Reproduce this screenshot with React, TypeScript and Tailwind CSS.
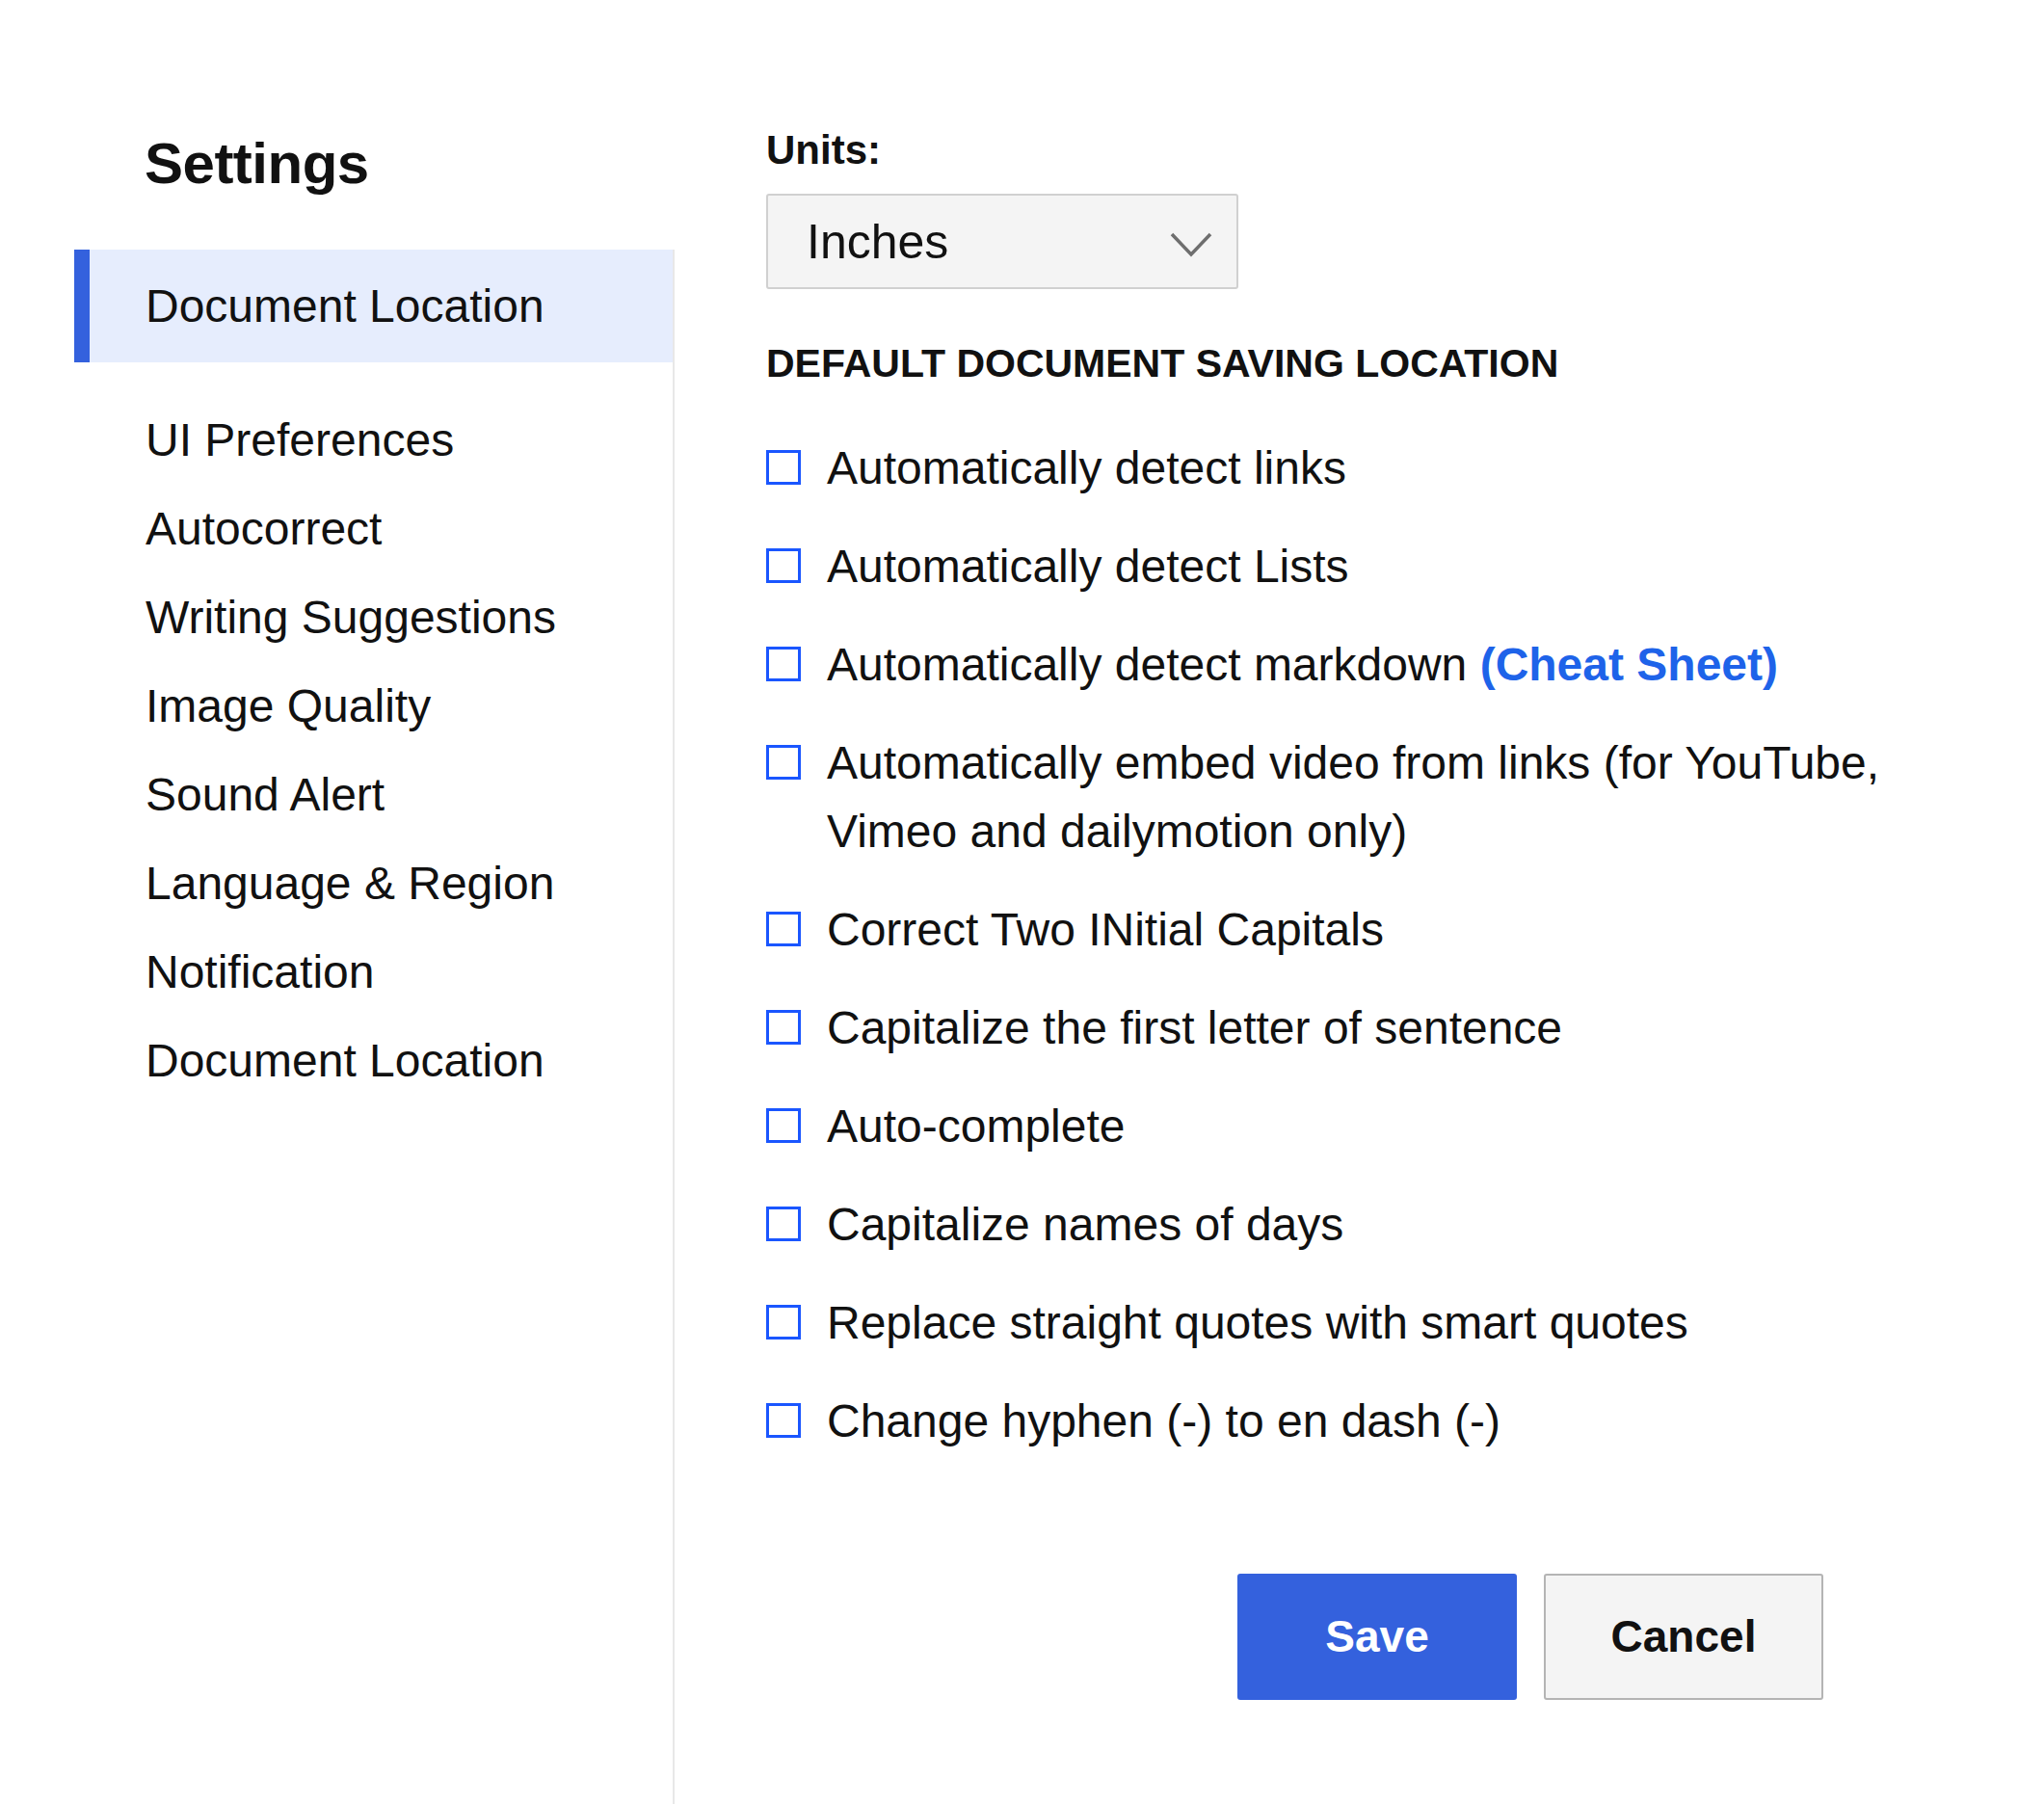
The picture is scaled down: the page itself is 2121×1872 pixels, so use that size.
import React, { useState } from 'react';

const navItems = [
  'UI Preferences',
  'Autocorrect',
  'Writing Suggestions',
  'Image Quality',
  'Sound Alert',
  'Language & Region',
  'Notification',
  'Document Location',
];

const options: { id: string; label: React.ReactNode }[] = [
  { id: 'links', label: 'Automatically detect links' },
  { id: 'lists', label: 'Automatically detect Lists' },
  {
    id: 'markdown',
    label: (
      <>
        Automatically detect markdown{' '}
        <a href="#" className="font-bold text-[#1e63e9]">(Cheat Sheet)</a>
      </>
    ),
  },
  { id: 'embed', label: 'Automatically embed video from links (for YouTube, Vimeo and dailymotion only)' },
  { id: 'initials', label: 'Correct Two INitial Capitals' },
  { id: 'sentence', label: 'Capitalize the first letter of sentence' },
  { id: 'complete', label: 'Auto-complete' },
  { id: 'days', label: 'Capitalize names of days' },
  { id: 'quotes', label: 'Replace straight quotes with smart quotes' },
  { id: 'dash', label: 'Change hyphen (-) to en dash (-)' },
];

export default function App() {
  const [checked, setChecked] = useState<Record<string, boolean>>({});

  const toggle = (id: string) => setChecked((c) => ({ ...c, [id]: !c[id] }));

  return (
    <div className="flex h-screen w-full overflow-hidden bg-white font-['Liberation_Sans',Arial,sans-serif] text-[#111]">
      {/* sidebar */}
      <aside className="ml-[77px] flex w-[623px] shrink-0 flex-col">
        <h1 className="mt-[140px] pl-[73px] text-[60px] font-bold leading-none tracking-[-0.5px]">Settings</h1>
        <nav className="mt-[59px] flex flex-1 flex-col border-r-2 border-[#e8e8e8]">
          <div className="flex h-[117px] items-center border-l-[16px] border-[#3461dd] bg-[#e6edfd] pl-[58px] text-[48px] leading-none">
            Document Location
          </div>
          <ul className="mt-[35px]">
            {navItems.map((item, i) => (
              <li key={i} className="h-[92px] pl-[74px] text-[48px] leading-[92px]">
                {item}
              </li>
            ))}
          </ul>
        </nav>
      </aside>

      {/* content */}
      <main className="flex flex-1 flex-col pl-[95px] pr-[90px] pt-[135px]">
        <label className="text-[42px] font-bold leading-none">Units:</label>
        <button className="mt-[24px] flex h-[99px] w-[490px] items-center justify-between rounded-[3px] border-2 border-[#d0d0d0] bg-[#f4f4f4] pl-[40px] pr-[25px] text-[50px] leading-none">
          <span>Inches</span>
          <svg width="44" height="26" viewBox="0 0 44 26" fill="none" className="mt-[6px]">
            <path d="M2 2 L22 23 L42 2" stroke="#6e6e6e" strokeWidth="3.5" />
          </svg>
        </button>

        <h2 className="mt-[57px] text-[41px] font-bold leading-none">DEFAULT DOCUMENT SAVING LOCATION</h2>

        <div className="mt-[52px] flex flex-col gap-[31px]">
          {options.map((o) => (
            <label key={o.id} className="flex cursor-pointer items-start gap-[27px]" onClick={() => toggle(o.id)}>
              <span className="mt-[17px] flex h-[36px] w-[36px] shrink-0 items-center justify-center border-[3px] border-[#1a56ff] bg-white">
                {checked[o.id] && <span className="h-[18px] w-[18px] bg-[#1a56ff]" />}
              </span>
              <span className="text-[48px] leading-[71px]">{o.label}</span>
            </label>
          ))}
        </div>

        <div className="mt-[123px] flex gap-[28px] pl-[489px]">
          <button className="h-[131px] w-[290px] rounded-[3px] bg-[#3461dd] text-[46px] font-semibold text-white">Save</button>
          <button className="h-[131px] w-[290px] rounded-[3px] border-2 border-[#b4b4b4] bg-[#f4f4f4] text-[46px] font-semibold text-[#111]">Cancel</button>
        </div>
      </main>
    </div>
  );
}
